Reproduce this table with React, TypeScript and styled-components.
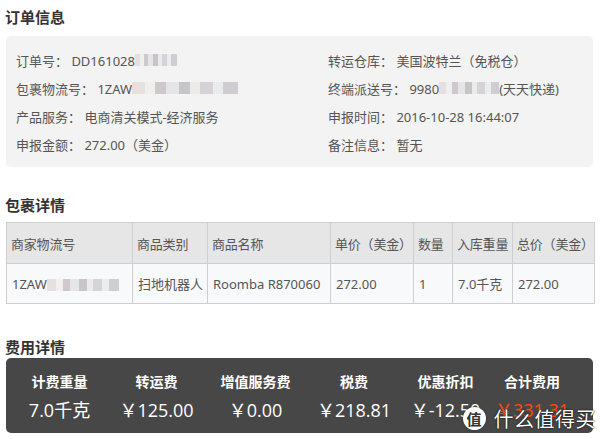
import React from 'react';
import styled, { createGlobalStyle } from 'styled-components';

const GlobalStyle = createGlobalStyle`
  body {
    margin: 0;
    background: #fff;
    font-family: "Noto Sans", "Noto Sans CJK SC", sans-serif;
    color: #555;
  }
`;

const Page = styled.div`
  position: relative;
  width: 600px;
  height: 439px;
  box-sizing: border-box;
  padding: 0 7px 0 6px;
  overflow: hidden;
`;

const SectionTitle = styled.h3<{ $top: number; $h: number }>`
  margin: ${(p) => p.$top}px 0 0 -1px;
  height: ${(p) => p.$h}px;
  line-height: ${(p) => p.$h}px;
  font-size: 15px;
  font-weight: 700;
  color: #333;
  font-family: "Noto Sans CJK SC", sans-serif;
`;

const InfoBox = styled.div`
  margin-top: 2px;
  background: #f3f3f3;
  border-radius: 5px;
  padding: 10px 0 9px 10px;
  display: grid;
  grid-template-columns: 312px 1fr;
  grid-auto-rows: 28px;
`;

const InfoRow = styled.div`
  display: flex;
  align-items: center;
  font-size: 13px;
  color: #555;
  white-space: nowrap;
`;

const Blur = styled.span<{ $w: number }>`
  display: inline-block;
  width: ${(p) => p.$w}px;
  height: 12px;
  vertical-align: middle;
  background: linear-gradient(
    90deg,
    #e4dcdc 0 12%,
    #f0eded 12% 22%,
    #c9c1c4 22% 32%,
    #e3e3e6 32% 44%,
    #bdbdc2 44% 55%,
    #ece8e8 55% 64%,
    #cfcdd3 64% 76%,
    #e8eaec 76% 86%,
    #c8c6cb 86% 100%
  );
  opacity: 0.85;
`;

const Table = styled.table`
  width: 588px;
  border-collapse: collapse;
  table-layout: fixed;
  font-size: 13px;
  color: #555;
`;

const Col = styled.col<{ $w: number }>`
  width: ${(p) => p.$w}px;
`;

const Th = styled.th`
  height: 40px;
  padding: 0 0 0 4px;
  background: #e6e6e6;
  border: 1px solid #cfcfcf;
  text-align: left;
  font-weight: 400;
  white-space: nowrap;
  letter-spacing: -0.2px;
`;

const Td = styled.td`
  height: 39px;
  padding: 0 0 0 5px;
  background: #f8f9fa;
  border: 1px solid #cfcfcf;
  white-space: nowrap;
  overflow: hidden;
`;

const FeeBox = styled.div`
  background: #474747;
  border-radius: 5px;
  height: 75px;
  box-sizing: border-box;
  padding: 13px 0 0 5px;
  display: grid;
  grid-template-columns: 97px 97px 101px 96px 87px 86px;
`;

const FeeCol = styled.div`
  display: flex;
  flex-direction: column;
  align-items: center;
`;

const FeeLabel = styled.div`
  height: 20px;
  line-height: 20px;
  font-size: 14px;
  font-weight: 700;
  color: #fff;
  font-family: "Noto Sans CJK SC", sans-serif;
`;

const FeeValue = styled.div<{ $hot?: boolean }>`
  margin-top: 5px;
  height: 28px;
  line-height: 28px;
  font-size: 18px;
  color: ${(p) => (p.$hot ? '#ff4a0a' : '#fff')};
  font-family: "Open Sans", "Noto Sans CJK SC", sans-serif;
  white-space: nowrap;
`;

const Watermark = styled.div`
  position: absolute;
  right: 4px;
  bottom: 6px;
  display: flex;
  align-items: center;
  gap: 8px;
`;

const Badge = styled.div`
  width: 23px;
  height: 23px;
  border-radius: 50%;
  background: #fff;
  color: #333;
  font-size: 15px;
  font-weight: 700;
  display: flex;
  align-items: center;
  justify-content: center;
  font-family: "Noto Sans CJK SC", sans-serif;
  box-shadow: 0 0 2px rgba(0, 0, 0, 0.5);
`;

const MarkText = styled.div`
  font-size: 20px;
  color: #fff;
  font-family: "Noto Sans CJK SC", sans-serif;
  letter-spacing: 0.5px;
  text-shadow: 0 0 2px rgba(0, 0, 0, 0.8), 0 0 1px rgba(0, 0, 0, 0.8);
`;

const info = [
  [<>订单号：&nbsp;DD161028<Blur $w={42} /></>, <>转运仓库：&nbsp;美国波特兰（免税仓）</>],
  [<>包裹物流号：&nbsp;1ZAW<Blur $w={106} /></>, <>终端派送号：&nbsp;9980<Blur $w={60} />(天天快递)</>],
  [<>产品服务：&nbsp;电商清关模式-经济服务</>, <>申报时间：&nbsp;2016-10-28 16:44:07</>],
  [<>申报金额：&nbsp;272.00（美金）</>, <>备注信息：&nbsp;暂无</>],
];

const cols = [
  { title: '商家物流号', w: 126 },
  { title: '商品类别', w: 75 },
  { title: '商品名称', w: 123 },
  { title: '单价（美金）', w: 83 },
  { title: '数量', w: 39 },
  { title: '入库重量', w: 60 },
  { title: '总价（美金）', w: 82 },
];

const fees = [
  { label: '计费重量', value: '7.0千克' },
  { label: '转运费', value: '￥125.00' },
  { label: '增值服务费', value: '￥0.00' },
  { label: '税费', value: '￥218.81' },
  { label: '优惠折扣', value: '￥-12.50' },
  { label: '合计费用', value: '￥331.31', hot: true },
];

export default function App() {
  return (
    <Page>
      <GlobalStyle />
      <SectionTitle $top={0} $h={34}>订单信息</SectionTitle>
      <InfoBox>
        {info.flat().map((cell, i) => (
          <InfoRow key={i}>{cell}</InfoRow>
        ))}
      </InfoBox>

      <SectionTitle $top={21} $h={34}>包裹详情</SectionTitle>
      <Table>
        <colgroup>
          {cols.map((c) => (
            <Col key={c.title} $w={c.w} />
          ))}
        </colgroup>
        <thead>
          <tr>
            {cols.map((c) => (
              <Th key={c.title}>{c.title}</Th>
            ))}
          </tr>
        </thead>
        <tbody>
          <tr>
            <Td>1ZAW<Blur $w={72} /></Td>
            <Td>扫地机器人</Td>
            <Td>Roomba R870060</Td>
            <Td>272.00</Td>
            <Td>1</Td>
            <Td>7.0千克</Td>
            <Td>272.00</Td>
          </tr>
        </tbody>
      </Table>

      <SectionTitle $top={32} $h={22}>费用详情</SectionTitle>
      <FeeBox>
        {fees.map((f) => (
          <FeeCol key={f.label}>
            <FeeLabel>{f.label}</FeeLabel>
            <FeeValue $hot={f.hot}>{f.value}</FeeValue>
          </FeeCol>
        ))}
      </FeeBox>

      <Watermark>
        <Badge>值</Badge>
        <MarkText>什么值得买</MarkText>
      </Watermark>
    </Page>
  );
}
